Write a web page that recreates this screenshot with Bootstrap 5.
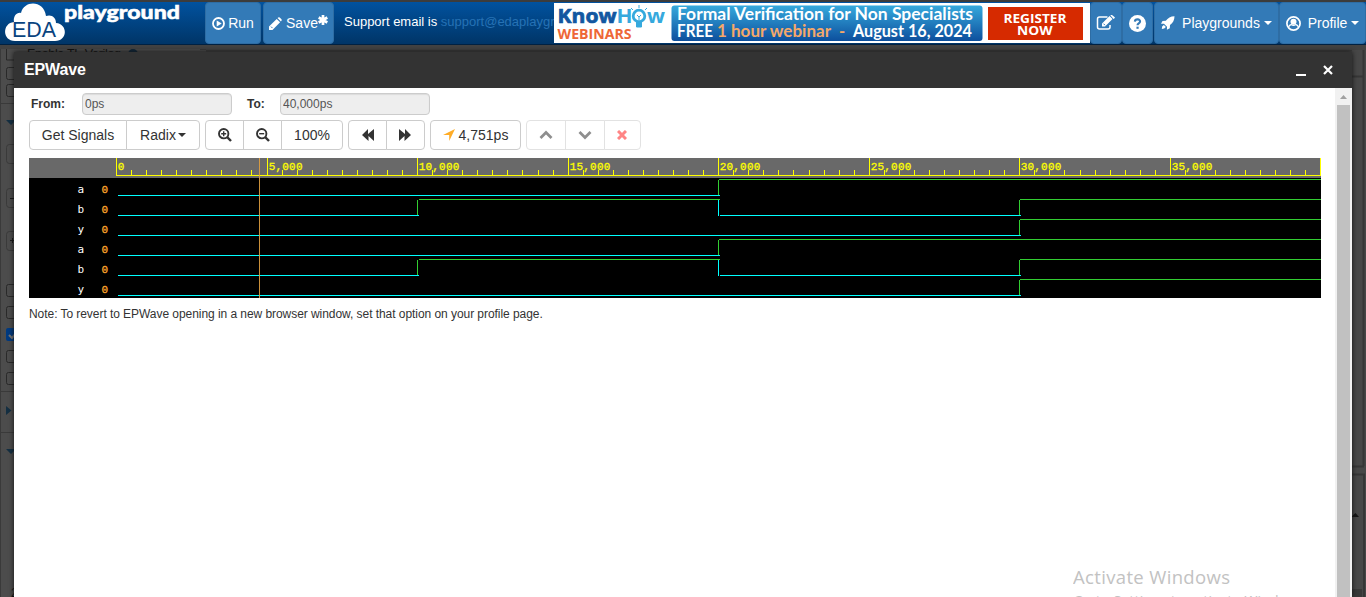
<!DOCTYPE html>
<html lang="en">
<head>
<meta charset="utf-8">
<title>EDA Playground</title>
<link href="https://cdn.jsdelivr.net/npm/bootstrap@5.3.0/dist/css/bootstrap.min.css" rel="stylesheet">
<style>
body{font-family:"Liberation Sans",Arial,sans-serif;font-size:12px;color:#333;background:#4c4c4c;height:597px;overflow:hidden}
svg{display:block;flex:none}
.topbar{height:45px;border-top:2px solid #3c3c3c;border-bottom:1px solid #002142;background:linear-gradient(#01529f,#003567)}
.brand-logo{width:205px;height:42px;overflow:visible}
.btn-eda{--bs-btn-color:#fff;--bs-btn-bg:#337ab7;--bs-btn-border-color:#2e6da4;--bs-btn-border-radius:4px;height:42px;font-size:14px;padding:0;display:flex;align-items:center;justify-content:center;white-space:nowrap;flex:none}
.tri{display:inline-block;border:4px solid transparent;border-top-color:currentColor;border-bottom:0}
.support{width:220px;padding-left:10px;height:39px;line-height:39px;font-size:13px;color:#fff;overflow:hidden;white-space:nowrap;flex:none}
.support a{color:#2672b5;text-decoration:none}
.backdrop-page{height:552px;background:#4c4c4c}
.wave-modal{position:absolute;left:14px;top:52px;width:1338px;height:545px;background:#fff;box-shadow:0 0 5px #111}
.wave-head{height:36px;background:#333;color:#fff;padding:0 18px 0 10px}
.wave-head h1{font-size:16px;font-weight:bold;margin:0;letter-spacing:-.15px}
.wave-main{padding:5px 14px 0 15px;width:1321px}
.range-row label{font-weight:bold}
.range-row input{width:150px;height:22px;min-height:0;padding:0 2px;font-size:12px;background:#eee!important;border:1px solid #ccc;border-radius:4px;color:#555;box-shadow:inset 0 1px 1px rgba(0,0,0,.08)}
.tools{margin-top:5px;gap:5px}
.tools .btn{--bs-btn-color:#333;--bs-btn-border-color:#ccc;--bs-btn-bg:#fff;--bs-btn-border-radius:4px;height:30px;padding:0;font-size:14px;display:flex;align-items:center;justify-content:center;flex:none}
.tools .faded{opacity:.55}
.tools .faded .btn{opacity:1}
.wave-view{margin-top:8px}
.note-line{margin-top:7px;letter-spacing:-.055px}
.fake-scroll{width:17px;background:#f1f1f1;padding:7px 2px 0}
.fake-scroll .thumb{background:#c1c1c1;height:510px;margin-top:6px}
.watermark{position:absolute;left:1059px;top:513px;width:270px;height:32px;overflow:hidden}
</style>
<script src="https://cdn.jsdelivr.net/npm/bootstrap@5.3.0/dist/js/bootstrap.bundle.min.js"></script>
</head>
<body>
<nav class="topbar d-flex">
  <svg class="brand-logo" viewBox="0 2 205 42">
    <path d="M15 41C2 41 2 23 14 22C13 16 17 12 21 13C24 0 44 0 46 16C52 14 56 18 56 23C68 24 68 41 55 41Z" fill="#fff"/>
    <text x="12" y="37" font-size="22" textLength="44" lengthAdjust="spacingAndGlyphs" fill="#0a4480">EDA</text>
    <text x="64" y="19" font-family="Lato" font-weight="900" font-size="19.500" textLength="116" lengthAdjust="spacingAndGlyphs" fill="#fff" stroke="#fff" stroke-width=".5">playground</text>
  </svg>
  <button class="btn btn-eda" style="width:56px">
    <svg width="13" height="13" viewBox="0 0 13 13" style="margin-right:3px"><circle cx="6.500" cy="6.500" r="5.500" fill="none" stroke="#fff" stroke-width="1.800"/><path d="M4.700 3.400L9.700 6.500L4.700 9.600Z" fill="#fff"/></svg>Run</button>
  <button class="btn btn-eda" style="width:71px;margin-left:2px">
    <svg width="13" height="13" viewBox="0 0 13 13" style="margin-right:4px"><path d="M0 13V9.500L7.700 1.900L11.100 5.300L3.500 13ZM8.500 1.100L9.300.4Q10 0 10.700.5L12.500 2.300Q13 3 12.500 3.700L11.900 4.500Z" fill="#fff"/><path d="M2 9.600L3.500 11.100" stroke="#337ab7"/></svg>Save<svg width="10" height="12" viewBox="0 0 10 12" style="margin-top:-7px"><path d="M5 1V11M.7 3.500L9.300 8.500M9.300 3.500L.7 8.500" stroke="#fff" stroke-width="2.700"/></svg></button>
  <div class="support">Support email is <a href="#">support@edaplayground.com</a></div>
  <svg width="536" height="42" viewBox="554 2 536 42">
    <defs><linearGradient id="adblue" x2="0" y2="1"><stop stop-color="#36a9dd"/><stop offset="1" stop-color="#0c4f9d"/></linearGradient></defs>
    <rect x="554" y="3" width="536" height="40" fill="#fff"/>
    <g font-family="Open Sans" font-weight="bold">
      <text x="557.500" y="23" font-size="19.500" textLength="59" lengthAdjust="spacingAndGlyphs" fill="#1257a1" stroke="#1257a1" stroke-width=".7">Know</text>
      <text x="616.500" y="23" font-size="19.500" textLength="16" lengthAdjust="spacingAndGlyphs" fill="#36a9dd">H</text>
      <text x="647" y="23" font-size="19.500" textLength="18" lengthAdjust="spacingAndGlyphs" fill="#36a9dd">w</text>
      <text x="557.500" y="39" font-size="14.500" textLength="74" lengthAdjust="spacingAndGlyphs" fill="#ee6737">WEBINARS</text>
    </g>
    <circle cx="639" cy="16" r="5.800" fill="none" stroke="#36a9dd" stroke-width="2.800"/>
    <path d="M636.500 22h5v5h-5zM639 5v3M631 8l2 2M647 8l-2 2" fill="#36a9dd" stroke="#36a9dd"/>
    <path d="M637 15l2 2 2-2M639 17v4" fill="none" stroke="#36a9dd"/>
    <rect x="671.500" y="5.500" width="311" height="35.500" rx="3" fill="url(#adblue)"/>
    <g font-family="Lato" font-weight="bold" font-size="16.500" fill="#fff">
      <text x="677" y="20" textLength="296" lengthAdjust="spacingAndGlyphs">Formal Verification for Non Specialists</text>
      <text x="677" y="37" textLength="36" lengthAdjust="spacingAndGlyphs">FREE</text>
      <g fill="#f5a869"><text x="717" y="37" textLength="114" lengthAdjust="spacingAndGlyphs">1 hour webinar</text><text x="839" y="37">-</text></g>
      <text x="853" y="37" textLength="119" lengthAdjust="spacingAndGlyphs">August 16, 2024</text>
    </g>
    <rect x="988" y="7" width="95" height="33" fill="#d62a00"/>
    <g font-family="Open Sans" font-weight="bold" font-size="13" fill="#fff">
      <text x="1003.500" y="23" textLength="63" lengthAdjust="spacingAndGlyphs">REGISTER</text>
      <text x="1017" y="34.500" textLength="35.500" lengthAdjust="spacingAndGlyphs">NOW</text>
    </g>
  </svg>
  <button class="btn btn-eda" style="width:32px">
    <svg width="20" height="16" viewBox="0 0 20 16"><path d="M11.500 2H3.500Q1.500 2 1.500 4V12Q1.500 14 3.500 14H12Q14 14 14 12V10" fill="none" stroke="#fff" stroke-width="1.500"/><path d="M6 11.500V8.500L13.500 1L16.500 4L9 11.500ZM14.300.3L15 0H16L18.800 2.300V3L17.500 4Z" fill="#fff"/><path d="M7.500 8.700L9 10.200" stroke="#337ab7"/></svg></button>
  <button class="btn btn-eda" style="width:31px">
    <svg width="17" height="17" viewBox="0 0 16 16"><circle cx="8" cy="8" r="8" fill="#fff"/><path d="M5.500 6.200C5.800 3.300 10.700 3.500 10.400 6.300C10.200 8 8 7.800 8 9.600" fill="none" stroke="#337ab7" stroke-width="2"/><rect x="7" y="11" width="2.100" height="2" fill="#337ab7"/></svg></button>
  <button class="btn btn-eda" style="width:125px;margin-left:1px">
    <svg width="14" height="14" viewBox="0 0 14 14" style="margin-right:7px"><path d="M13.500.3C9.500.4 7 2 4.800 4.800L1.500 5L0 7.800L3 7.700L6 10.700L5.900 13.800L8.800 12.300L9 9C12 6.700 13.500 4 13.500.3Z" fill="#fff"/><path d="M2.800 8.900Q.5 10 .8 13Q3.500 13 4.900 11Z" fill="#fff"/></svg>Playgrounds<i class="tri" style="margin-left:4px"></i></button>
  <button class="btn btn-eda" style="width:87px">
    <svg width="15" height="15" viewBox="0 0 15 15" style="margin-right:7px"><circle cx="7.500" cy="7.500" r="6.600" fill="none" stroke="#fff" stroke-width="1.700"/><circle cx="7.500" cy="5.700" r="3" fill="#fff"/><path d="M2.500 12Q2.800 9 5 8.600Q7.500 10.200 10 8.600Q12.200 9 12.500 12" fill="none" stroke="#fff" stroke-width="1.200"/></svg>Profile<i class="tri" style="margin-left:4px"></i></button>
</nav>

<main class="backdrop-page">
  <svg width="1366" height="552" viewBox="0 45 1366 552">
    <path d="M0 45H1366V49H0Z" fill="#424242"/>
    <path d="M0 49H200V597H0Z" fill="#4c4c4c"/>
    <path d="M206 49H1366V53H206Z" fill="#424242"/>
    <path d="M.5 49V597M200 49.500H206M206 50.500H1366M0 103.500H14M0 391.500H14M0 432.500H14" stroke="#3a3a3a" fill="none"/>
    <text x="27" y="58" font-size="12.500" textLength="94" fill="#111">Enable TL-Verilog</text>
    <circle cx="133" cy="54" r="5" fill="#10273a"/>
    <g fill="none" stroke="#292929"><path d="M6.500 49V60H18"/><rect x="6.500" y="67.500" width="12" height="12" rx="2"/><rect x="6.500" y="84.500" width="12" height="12" rx="2"/><rect x="6.500" y="284.500" width="12" height="12" rx="2"/><rect x="6.500" y="306.500" width="12" height="12" rx="2"/><rect x="6.500" y="350.500" width="12" height="12" rx="2"/><rect x="6.500" y="372.500" width="12" height="12" rx="2"/></g>
    <g fill="none" stroke="#3a3a3a"><rect x="6.500" y="144.500" width="20" height="19" rx="3"/><rect x="6.500" y="188.500" width="20" height="19" rx="3"/><rect x="6.500" y="231.500" width="20" height="19" rx="3"/></g>
    <path d="M10 198.500h4M10 240.500h4M12.500 238v5" stroke="#191919"/>
    <rect x="6" y="328" width="13" height="13" rx="2" fill="#003a80"/><path d="M9 335l3 3 5-6" stroke="#777" stroke-width="2" fill="none"/>
    <path d="M6 120H16L11 125ZM6 406L11.500 410.500L6 415ZM6 449H16L11 454Z" fill="#142f42"/>
    <text x="11" y="597" font-size="12" fill="#111">2</text>
    <path d="M1352 50H1366V597H1352Z" fill="#474747"/>
    <path d="M1352 76.500H1363M1363.500 50V466M1352 466.500H1364M1352 474.500H1364V597" stroke="#363636" stroke-width="2" fill="none"/>
    <path d="M1351 517L1355.500 513L1359 517Z" fill="#151515"/>
    <rect x="1352" y="589" width="10" height="8" fill="#383838"/>
  </svg>
</main>

<section class="wave-modal">
  <header class="wave-head d-flex align-items-center justify-content-between">
    <h1>EPWave</h1>
    <svg width="40" height="12" viewBox="1294 64 40 12"><path d="M1296 75H1306" stroke="#fff" stroke-width="2"/><path d="M1324 66L1332 74M1332 66L1324 74" stroke="#fff" stroke-width="2.200"/></svg>
  </header>
  <div class="d-flex" style="height:509px">
    <div class="wave-main">
      <div class="range-row d-flex align-items-center">
        <label style="width:53px;padding-left:2px">From:</label><input class="form-control" value="0ps" readonly>
        <label style="width:48px;padding-left:15px">To:</label><input class="form-control" value="40,000ps" readonly>
      </div>
      <div class="tools d-flex">
        <div class="btn-group"><button class="btn" style="width:98px">Get Signals</button><button class="btn" style="width:74px">Radix<i class="tri" style="margin-left:2px"></i></button></div>
        <div class="btn-group">
          <button class="btn" style="width:39px"><svg width="14" height="14" viewBox="0 0 14 14" fill="none" stroke="#333"><circle cx="5.700" cy="5.700" r="4.700" stroke-width="1.900"/><path d="M9.200 9.200L13 13" stroke-width="2.400"/><path d="M3.200 5.700H8.200M5.700 3.200V8.200" stroke-width="1.400"/></svg></button>
          <button class="btn" style="width:39px"><svg width="14" height="14" viewBox="0 0 14 14" fill="none" stroke="#333"><circle cx="5.700" cy="5.700" r="4.700" stroke-width="1.900"/><path d="M9.200 9.200L13 13" stroke-width="2.400"/><path d="M3.200 5.700H8.200" stroke-width="1.400"/></svg></button>
          <button class="btn" style="width:62px">100%</button></div>
        <div class="btn-group">
          <button class="btn" style="width:39px"><svg width="13" height="12" viewBox="0 0 13 12" style="margin-left:2px"><path d="M0 6L6 0V5L12 0V12L6.500 7V12Z" fill="#333"/></svg></button>
          <button class="btn" style="width:39px"><svg width="13" height="12" viewBox="0 0 13 12" style="margin-right:2px"><path d="M13 6L7 0V5L1 0V12L6.500 7V12Z" fill="#333"/></svg></button></div>
        <button class="btn" style="width:91px"><svg width="12" height="12" viewBox="0 0 12 12" style="margin-right:4px"><path d="M12 0L6.200 12V6H0Z" fill="#ffac26"/></svg>4,751ps</button>
        <div class="btn-group faded">
          <button class="btn" style="width:40px"><svg width="14" height="10" viewBox="0 0 14 10"><path d="M1.500 8L7 2.500L12.500 8" fill="none" stroke="#333" stroke-width="2.700"/></svg></button>
          <button class="btn" style="width:40px"><svg width="14" height="10" viewBox="0 0 14 10"><path d="M1.500 2L7 7.500L12.500 2" fill="none" stroke="#333" stroke-width="2.700"/></svg></button>
          <button class="btn" style="width:37px"><svg width="10" height="10" viewBox="0 0 10 10" style="margin-right:2px"><path d="M1 1L9 9M9 1L1 9" stroke="#f22" stroke-width="3"/></svg></button></div>
      </div>
      <svg class="wave-view" id="wave" width="1292" height="140" viewBox="29 158 1292 140" shape-rendering="crispEdges" font-family="Liberation Mono" font-size="11"></svg>
      <div class="note-line">Note: To revert to EPWave opening in a new browser window, set that option on your profile page.</div>
    </div>
    <div class="fake-scroll"><svg width="13" height="4" viewBox="0 0 13 4"><path d="M3 4L6.500 0L10 4Z" fill="#a0a0a0"/></svg><div class="thumb"></div></div>
  </div>
  <svg class="watermark" viewBox="0 0 270 32" font-family="Open Sans" fill="#c2c2c2"><text x="0" y="19" font-size="18.500" textLength="157">Activate Windows</text><text x="0" y="40.500" font-size="14" textLength="236">Go to Settings to activate Windows.</text></svg>
</section>
<script>
// Time ruler: ten minor ticks between labels, 40,000ps over 1204 pixels
let out='<path fill="#000" d="M29 158h1292v140h-1292z"/><path fill="#696969" d="M29 158h1292v20h-1292z"/>';
let ticks='M116 175h1205v1h-1205z';
for(let i=0;i<=80;i++){
  const x=Math.round(116+i*15.055), major=i%10===0;
  ticks+=major?`M${x} 158h1v18h-1z`:`M${x} 170h1v5h-1z`;
  if(major&&i<80) out+=`<text x="${x+1.7}" y="170" fill="#ff0" stroke="#ff0" stroke-width=".3" letter-spacing=".2">${(i*500).toLocaleString('en-US')}</text>`;
}
out+=`<path fill="#ff0" d="${ticks}"/>`;
const signals=[['a',[[719,1]]],['b',[[418,1],[719,0],[1020,1]]],['y',[[1020,1]]]];
[...signals,...signals].forEach(([name,edges],r)=>{
  const hi=179+20*r, lo=195+20*r;
  out+=`<text x="77.500" y="${193+20*r}" fill="#fff" font-family="DejaVu Sans Mono">${name}</text><text x="101.500" y="${193+20*r}" fill="#ffa62b" stroke="#ffa62b" stroke-width=".3">0</text>`;
  let x=118,v=0;
  const seg=(a,b,s)=>{out+=`<path fill="${s?'#32cd32':'#0ff'}" d="M${a} ${s?hi:lo}h${b-a}v1h${a-b}z"/>`};
  edges.forEach(([t,n])=>{
    seg(x,t+1,v);
    out+=`<path fill="${n?'#32cd32':'#0ff'}" d="M${t-1} ${hi+1}h1v${n?15:16}h-1z"/>`;
    x=n&&t>500?t:t+1; v=n;
  });
  seg(x,1321,v);
});
out+='<path fill="#e0a040" fill-opacity=".9" d="M259 158h1v140h-1z"/>';
document.getElementById('wave').innerHTML=out;
</script>
</body>
</html>
